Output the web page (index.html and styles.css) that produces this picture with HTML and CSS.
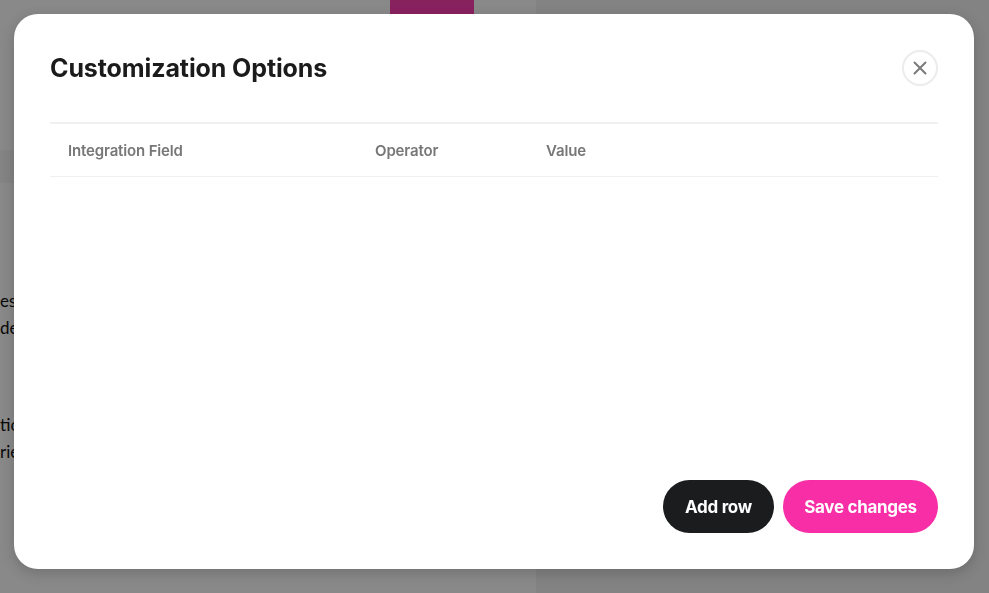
FILE: index.html
```html
<!DOCTYPE html>
<html lang="en">
<head>
<meta charset="utf-8">
<title>Customization Options</title>
<link rel="stylesheet" href="styles.css">
</head>
<body>
<div class="page">
  <div class="page-main">
    <div class="page-top">
      <span class="page-btn"></span>
    </div>
    <div class="page-band"></div>
    <div class="page-text">
      <p>essential data</p>
      <p>details for all</p>
      <p class="gap">tions for each</p>
      <p>ries to run</p>
    </div>
  </div>
  <div class="page-side"></div>
</div>
<div class="overlay"></div>
<div class="modal" role="dialog" aria-labelledby="modal-title">
  <div class="modal-head">
    <h2 id="modal-title" class="modal-title">Customization Options</h2>
    <button class="close-btn" aria-label="Close">
      <svg width="16" height="16" viewBox="0 0 16 16" aria-hidden="true"><path d="M2.5 2.5 L13.5 13.5 M13.5 2.5 L2.5 13.5" stroke="#7a7a7a" stroke-width="2" stroke-linecap="round" fill="none"/></svg>
    </button>
  </div>
  <div class="table-head">
    <div class="th">Integration Field</div>
    <div class="th">Operator</div>
    <div class="th">Value</div>
  </div>
  <div class="table-body"></div>
  <div class="modal-foot">
    <button class="btn btn-dark">Add row</button>
    <button class="btn btn-pink">Save changes</button>
  </div>
</div>
</body>
</html>
```

FILE: styles.css
```css
* { box-sizing: border-box; }
html, body { margin: 0; padding: 0; height: 100%; }
body {
  font-family: Inter, "Noto Sans", sans-serif;
  background: #ffffff;
  overflow: hidden;
}
.page {
  display: flex;
  height: 593px;
}
.page-main {
  width: 536px;
  display: flex;
  flex-direction: column;
  background: #ffffff;
}
.page-top {
  height: 150px;
  padding-left: 390px;
}
.page-btn {
  display: block;
  width: 84px;
  height: 14px;
  background: #ff3eb2;
}
.page-band {
  height: 33px;
  background: #f5f5f5;
}
.page-text {
  padding-top: 104px;
  font-family: Lato, sans-serif;
  font-size: 17px;
  color: #111;
}
.page-text p { margin: 0; line-height: 27px; white-space: nowrap; }
.page-text .gap { margin-top: 70px; }
.page-side {
  flex: 1;
  background: #f3f3f3;
}
.overlay {
  position: fixed;
  inset: 0;
  background: rgba(0, 2, 1, 0.465);
}
.modal {
  position: fixed;
  left: 14px;
  top: 14px;
  width: 960px;
  height: 555px;
  background: #fff;
  border-radius: 24px;
  box-shadow: 0 4px 14px rgba(0, 0, 0, 0.18);
  padding: 36px;
  display: flex;
  flex-direction: column;
}
.modal-head {
  display: flex;
  align-items: center;
  justify-content: space-between;
  height: 36px;
  margin-bottom: 36px;
}
.modal-title {
  margin: 0;
  font-size: 25px;
  font-weight: 700;
  color: #1b1b1b;
  letter-spacing: -0.1px;
}
.close-btn {
  width: 36px;
  height: 36px;
  border-radius: 50%;
  border: 2px solid #ececec;
  background: #fff;
  padding: 0;
  display: flex;
  align-items: center;
  justify-content: center;
}
.table-head {
  display: grid;
  grid-template-columns: 307px 171px 1fr;
  height: 55px;
  border-top: 2px solid #f0f0f0;
  border-bottom: 1px solid #f0f0f0;
  align-items: center;
}
.th {
  padding-left: 18px;
  font-size: 15px;
  font-weight: 600;
  color: #777;
  letter-spacing: -0.15px;
}
.table-body { flex: 1; }
.modal-foot {
  display: flex;
  justify-content: flex-end;
  gap: 9px;
}
.btn {
  height: 53px;
  border: none;
  border-radius: 27px;
  font-family: Inter, "Noto Sans", sans-serif;
  font-size: 17px;
  font-weight: 700;
  color: #fff;
  letter-spacing: -0.3px;
}
.btn-dark { background: #1b1c1e; width: 111px; }
.btn-pink { background: #f72ea6; width: 155px; }
```
